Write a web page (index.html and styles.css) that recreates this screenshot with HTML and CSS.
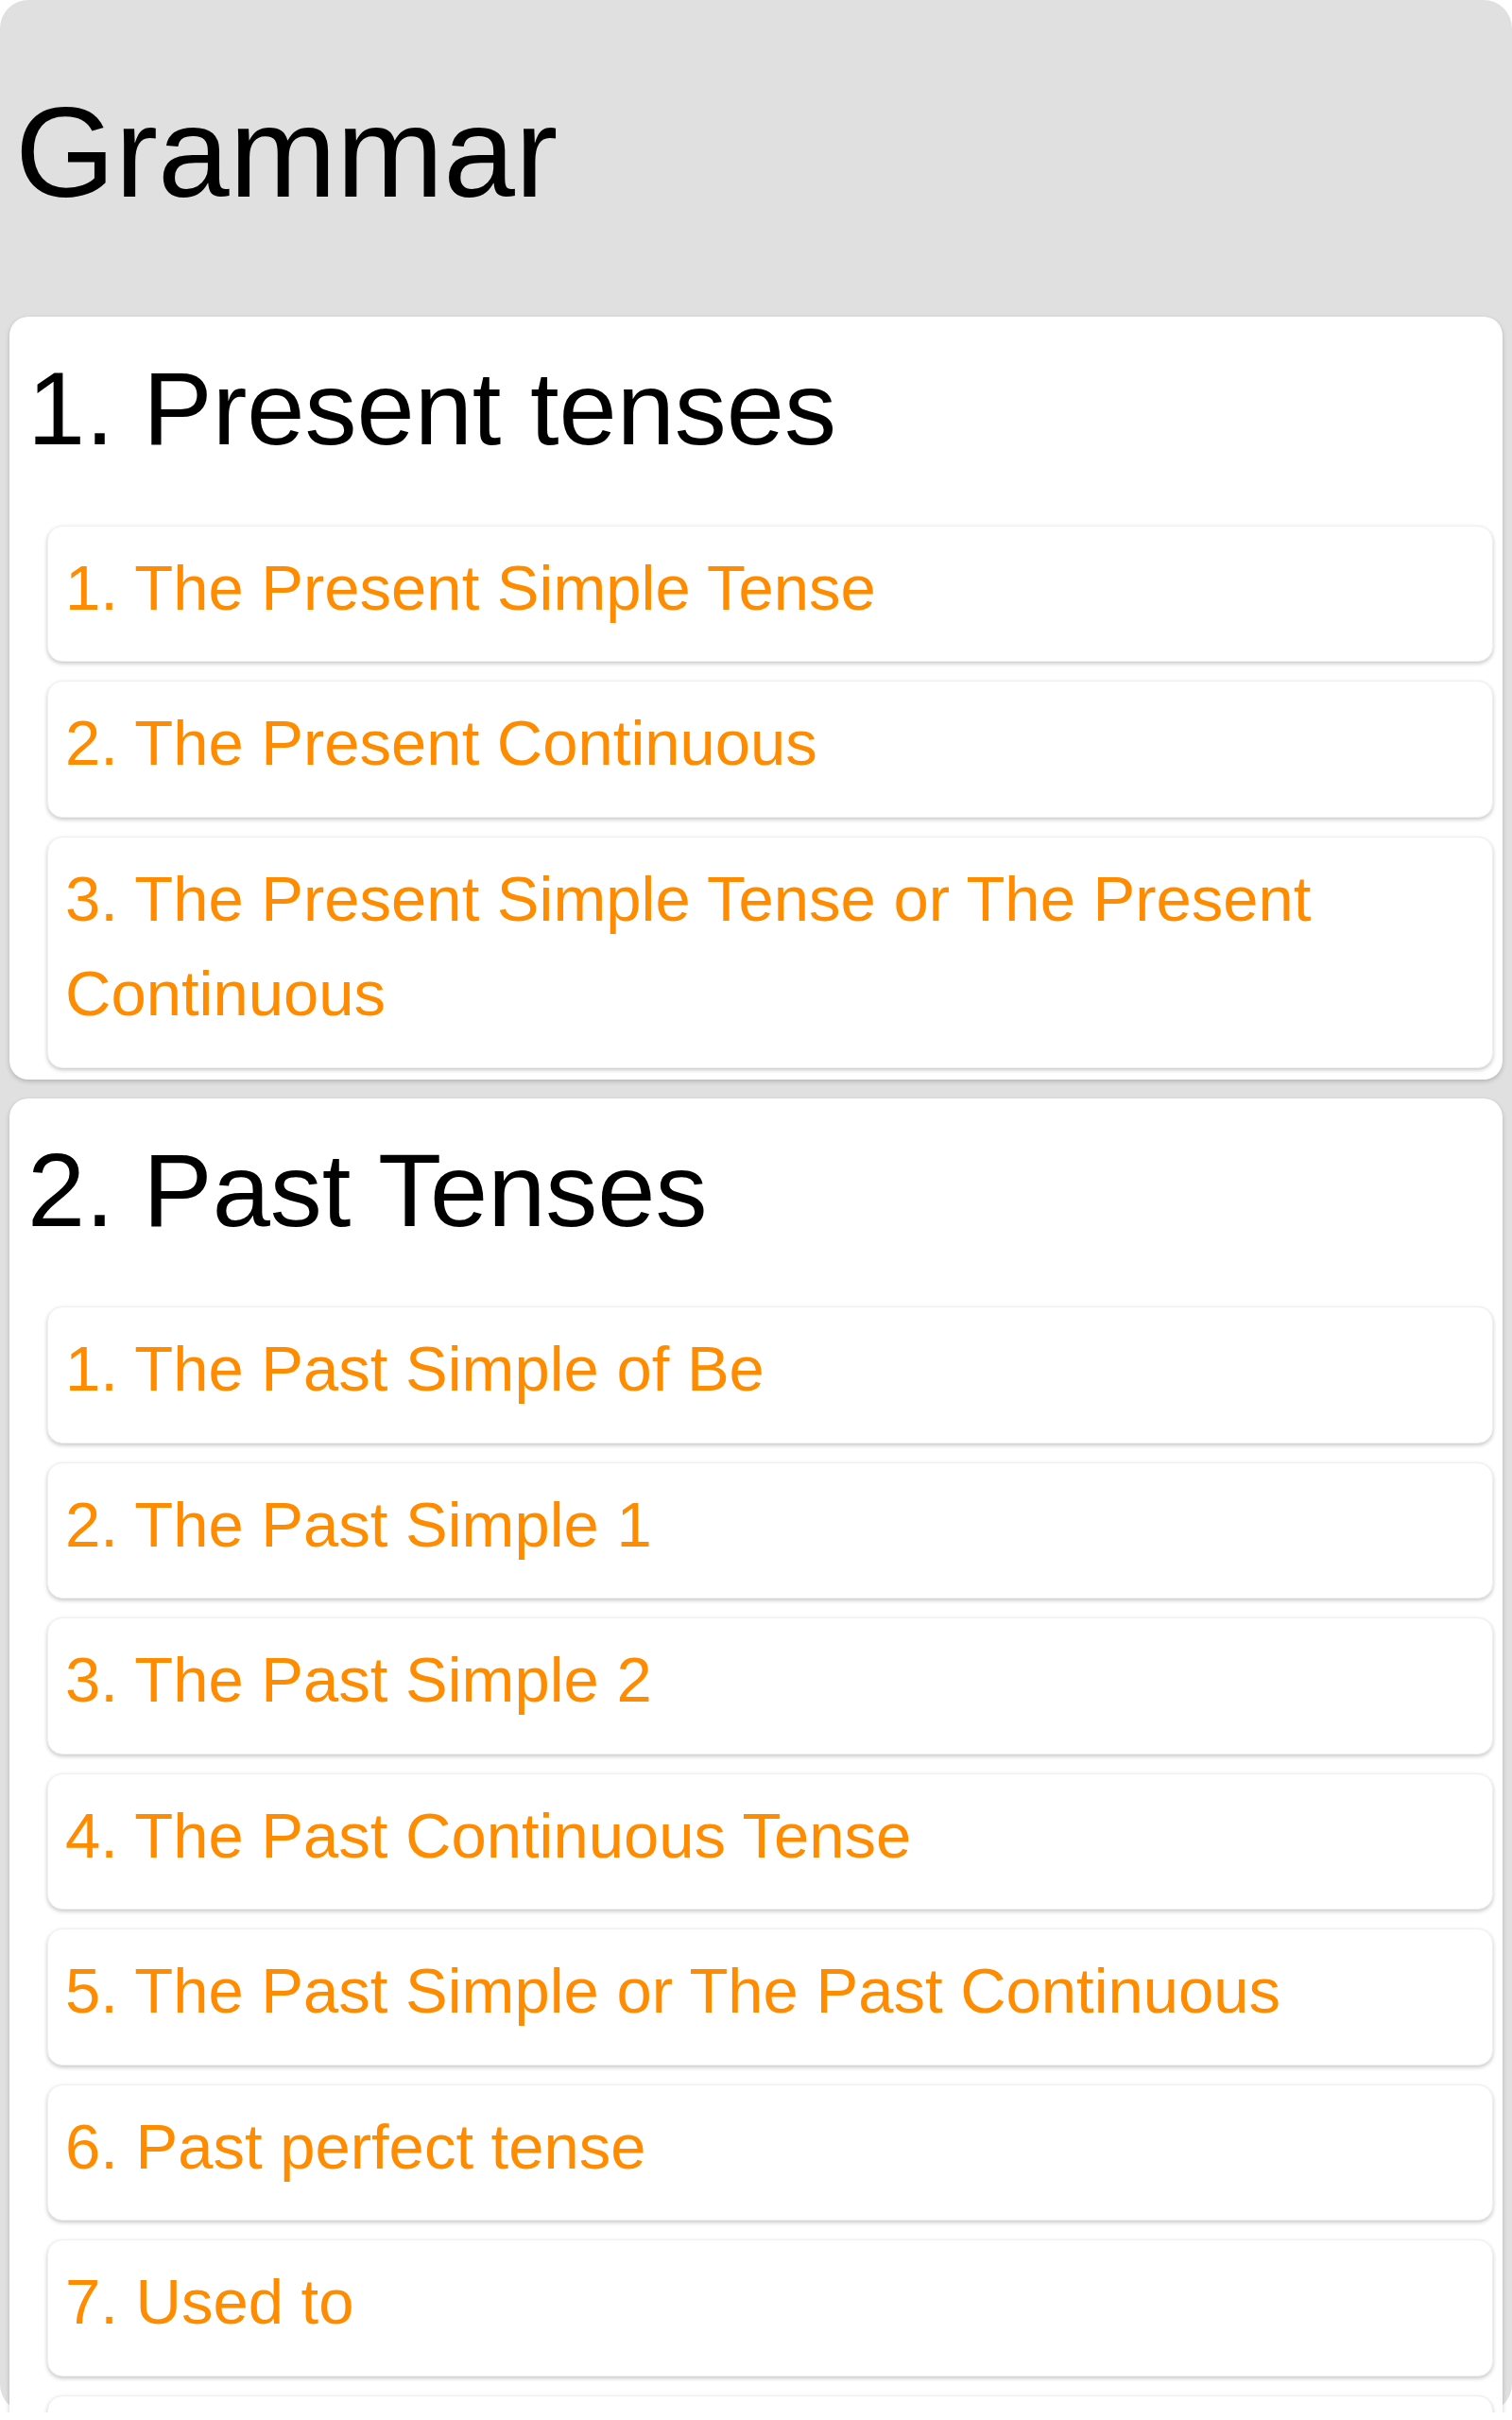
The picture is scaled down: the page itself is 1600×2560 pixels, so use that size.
FILE: index.html
```html
<!DOCTYPE html>
<html lang="en">
<head>
  <meta charset="UTF-8">
  <meta name="viewport" content="width=device-width, initial-scale=1">
  <title>Grammar</title>
  <link rel="stylesheet" href="styles.css">
</head>
<body>
  <div class="app">
    <h1 class="title">Grammar</h1>

    <section class="unit">
      <h2>1. Present tenses</h2>
      <ul class="lessons">
        <li><a href="#">1. The Present Simple Tense</a></li>
        <li><a href="#">2. The Present Continuous</a></li>
        <li><a href="#">3. The Present Simple Tense or The Present Continuous</a></li>
      </ul>
    </section>

    <section class="unit">
      <h2>2. Past Tenses</h2>
      <ul class="lessons">
        <li><a href="#">1. The Past Simple of Be</a></li>
        <li><a href="#">2. The Past Simple 1</a></li>
        <li><a href="#">3. The Past Simple 2</a></li>
        <li><a href="#">4. The Past Continuous Tense</a></li>
        <li><a href="#">5. The Past Simple or The Past Continuous</a></li>
        <li><a href="#">6. Past perfect tense</a></li>
        <li><a href="#">7. Used to</a></li>
        <!-- next lesson is below the fold -->
        <li class="more"></li>
      </ul>
    </section>
  </div>
</body>
</html>
```

FILE: styles.css
```css
/* Base */
* {
  box-sizing: border-box;
}

html,
body {
  margin: 0;
  padding: 0;
  overflow: hidden;
}

body {
  background: #fff;
  font-family: "Liberation Sans", Arial, sans-serif;
  color: #000;
}

/* Page shell */
.app {
  background: #e0e0e0;
  border-radius: 30px;
  height: calc(100vh - 8px);
  padding: 0 10px;
}

.title {
  margin: 0;
  padding: 83px 6px 96px;
  font-size: 136px;
  font-weight: normal;
  line-height: 1.15;
}

/* Unit cards */
.unit {
  background: #fff;
  border-radius: 20px;
  box-shadow: 0 2px 5px rgba(0, 0, 0, 0.2);
  padding: 34px 10px 12px 0;
  margin-bottom: 20px;
}

.unit h2 {
  margin: 0 0 60px 19px;
  font-size: 110px;
  font-weight: normal;
  line-height: 1.15;
}

.lessons {
  list-style: none;
  margin: 0;
  padding: 0 0 0 40px;
  display: flex;
  flex-direction: column;
  gap: 20px;
}

.lessons li {
  background: #fff;
  border: 1px solid #f0f0f0;
  border-radius: 16px;
  box-shadow: 0 2px 4px rgba(0, 0, 0, 0.22);
  padding: 15px 24px 27px 18px;
  font-size: 67px;
  line-height: 1.5;
}

.lessons li.more {
  height: 145px;
}

.lessons a {
  color: #ff8c00;
  text-decoration: none;
}
```
